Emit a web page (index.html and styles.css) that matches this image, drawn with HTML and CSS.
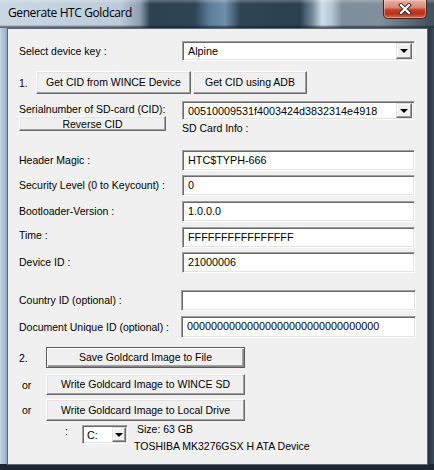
FILE: index.html
```html
<!DOCTYPE html>
<html>
<head>
<meta charset="utf-8">
<title>Generate HTC Goldcard</title>
<link rel="stylesheet" href="styles.css">
</head>
<body>
<div class="window">
  <div class="titlebar">
    <span class="title">Generate HTC Goldcard</span>
    <div class="close">
      <svg width="14" height="12" viewBox="0 0 14 12">
        <path d="M3 2 L11 10 M11 2 L3 10" stroke="#3a2a28" stroke-width="4" stroke-linecap="square" fill="none"/>
        <path d="M3 2 L11 10 M11 2 L3 10" stroke="#ffffff" stroke-width="2.2" stroke-linecap="square" fill="none"/>
      </svg>
    </div>
  </div>
  <div class="client">
    <div class="row r-key">
      <span class="lbl">Select device key :</span>
      <div class="combo field"><span class="ctext">Alpine</span><span class="arrow"></span></div>
    </div>

    <div class="row r-get">
      <span class="num">1.</span>
      <button class="btn b-wince">Get CID from WINCE Device</button>
      <button class="btn b-adb">Get CID using ADB</button>
    </div>

    <div class="serial">
      <div class="scol">
        <span class="slbl">Serialnumber of SD-card (CID):</span>
        <button class="btn b-rev">Reverse CID</button>
      </div>
      <div class="fcol">
        <div class="combo field c-cid"><span class="ctext">00510009531f4003424d3832314e4918</span><span class="arrow"></span></div>
        <span class="info">SD Card Info :</span>
      </div>
    </div>

    <div class="row tf r-magic">
      <span class="lbl">Header Magic :</span>
      <div class="box field">HTC$TYPH-666</div>
    </div>
    <div class="row tf r-sec">
      <span class="lbl">Security Level (0 to Keycount) :</span>
      <div class="box field">0</div>
    </div>
    <div class="row tf r-boot">
      <span class="lbl">Bootloader-Version :</span>
      <div class="box field">1.0.0.0</div>
    </div>
    <div class="row tf r-time">
      <span class="lbl up">Time :</span>
      <div class="box field">FFFFFFFFFFFFFFFF</div>
    </div>
    <div class="row tf r-dev">
      <span class="lbl">Device ID :</span>
      <div class="box field">21000006</div>
    </div>

    <div class="row tf r-country">
      <span class="lbl">Country ID (optional) :</span>
      <div class="box field2"></div>
    </div>
    <div class="row tf r-doc">
      <span class="lbl">Document Unique ID (optional) :</span>
      <div class="box field2">00000000000000000000000000000000</div>
    </div>

    <div class="row r-save">
      <span class="pre">2.</span>
      <button class="btn big default">Save Goldcard Image to File</button>
    </div>
    <div class="row r-wsd">
      <span class="pre or">or</span>
      <button class="btn big">Write Goldcard Image to WINCE SD</button>
    </div>
    <div class="row r-local">
      <span class="pre or">or</span>
      <button class="btn big">Write Goldcard Image to Local Drive</button>
    </div>

    <div class="row r-drive">
      <span class="colon">:</span>
      <div class="combo drive"><span class="ctext">C:</span><span class="arrow"></span></div>
      <div class="dinfo">
        <span class="size">Size: 63 GB</span>
        <span class="dev">TOSHIBA MK3276GSX H ATA Device</span>
      </div>
    </div>
  </div>
</div>
</body>
</html>
```

FILE: styles.css
```css
* { box-sizing: border-box; }
html, body { margin: 0; padding: 0; }
body {
  width: 434px;
  height: 470px;
  overflow: hidden;
  font-family: "Liberation Sans", Arial, sans-serif;
  font-size: 10.5px;
  color: #000;
  background: #1e2b37;
}

.window {
  width: 434px;
  height: 470px;
  display: flex;
  flex-direction: column;
  background:
    linear-gradient(to bottom, rgba(0,0,0,0) 0, rgba(0,0,0,0) 464px, #1c2733 464px),
    linear-gradient(to right, #c4d2df 0, #a9bfd4 4px, #8fa7bf 7px, #1e2b37 7px, #1e2b37 428px, #26333f 428px, #3c4b58 434px);
}

.titlebar {
  height: 28px;
  flex: none;
  display: flex;
  justify-content: space-between;
  align-items: flex-start;
  background:
    linear-gradient(to bottom, rgba(255,255,255,0.25) 0, rgba(255,255,255,0) 4px, rgba(0,0,0,0) 25px, rgba(20,30,40,0.6) 27px),
    linear-gradient(to right, #cad7e3 0, #bccbd9 120px, #8c9fb1 140px, #2c4152 150px, #2f4455 195px, #5d7e99 210px, #6f8fab 225px, #304657 240px, #2a3f50 300px, #6f8798 312px, #cfdde8 322px, #b4c4d0 332px, #7e8e9b 342px, #808f9b 380px, #44525e 430px);
}

.title {
  font-family: "Open Sans", "Noto Sans", sans-serif;
  font-size: 12px;
  line-height: 16px;
  margin: 5px 0 0 8px;
  color: #000;
  letter-spacing: -0.4px;
}

.close {
  width: 44px;
  height: 19px;
  margin-right: 7px;
  border: 1px solid #4a2119;
  border-top: none;
  border-radius: 0 0 5px 5px;
  background: linear-gradient(to bottom, #e9b0a3 0, #dc8a78 40%, #c2412a 55%, #b8311c 75%, #d56a52 100%);
  box-shadow: inset 0 0 0 1px rgba(255,220,210,0.45);
  display: flex;
  align-items: center;
  justify-content: center;
}

.client {
  flex: 1;
  margin: 0 6px 5px 7px;
  border: 1px solid #5b6874;
  background: #f0f0f0;
  padding: 12px 0 0 11px;
}

.row {
  display: flex;
  align-items: center;
}

.lbl {
  width: 163px;
  flex: none;
  line-height: 13px;
  white-space: nowrap;
}
.lbl.up { margin-top: -5px; }

/* inset field look */
.combo, .box {
  background: #fff;
  border: 1px solid;
  border-color: #a0a0a0 #ffffff #ffffff #a0a0a0;
  box-shadow: inset 1px 1px 0 #696969, inset -1px -1px 0 #e3e3e3;
  font-size: 10.8px;
}

.field { width: 233px; }
.field2 { width: 235px; margin-left: -1px; }

.combo {
  height: 20px;
  display: flex;
  align-items: center;
  justify-content: space-between;
  padding: 2px 2px 2px 5px;
}
.ctext { white-space: nowrap; }

.arrow {
  width: 16px;
  height: 16px;
  flex: none;
  background: #f0f0f0;
  border: 1px solid;
  border-color: #e3e3e3 #696969 #696969 #e3e3e3;
  box-shadow: inset -1px -1px 0 #a0a0a0, inset 1px 1px 0 #ffffff;
  position: relative;
}
.arrow::after {
  content: "";
  position: absolute;
  left: 3px;
  top: 5px;
  border-left: 4px solid transparent;
  border-right: 4px solid transparent;
  border-top: 4px solid #000;
}

.box {
  height: 21px;
  line-height: 17px;
  padding: 1px 0 0 5px;
  white-space: nowrap;
}

.btn {
  font-family: "Liberation Sans", Arial, sans-serif;
  font-size: 10.5px;
  color: #000;
  background: #f0f0f0;
  border: 1px solid;
  border-color: #ffffff #696969 #696969 #ffffff;
  box-shadow: inset -1px -1px 0 #a0a0a0, inset 1px 1px 0 #e3e3e3;
  padding: 0;
  margin: 0;
  line-height: 13px;
  white-space: nowrap;
}

.r-key { height: 20px; }

.r-get { height: 23px; margin-top: 10px; }
.num { width: 17px; flex: none; }
.b-wince { width: 155px; height: 23px; }
.b-adb { width: 114px; height: 23px; margin-left: 2px; }

.serial {
  display: flex;
  margin-top: 7px;
}
.scol {
  width: 163px;
  flex: none;
  display: flex;
  flex-direction: column;
  align-items: flex-start;
}
.slbl { line-height: 13px; margin-top: 2px; white-space: nowrap; }
.b-rev { width: 147px; height: 15px; line-height: 12px; }
.fcol { display: flex; flex-direction: column; }
.c-cid { height: 19px; padding-top: 1px; padding-bottom: 1px; }
.c-cid .arrow { height: 15px; }
.c-cid .arrow::after { top: 5px; }
.info { line-height: 13px; margin-top: 2px; }

.r-magic { margin-top: 15px; }
.r-sec { margin-top: 4px; }
.r-boot { margin-top: 5px; }
.r-time { margin-top: 5px; }
.r-dev { margin-top: 4px; }
.r-country { margin-top: 17px; }
.r-doc { margin-top: 5px; }
.r-doc .box { height: 22px; }

.pre { width: 27px; flex: none; }
.pre.or { padding-left: 3px; }
.big { width: 199px; height: 21px; }
.btn.default {
  border-color: #5a5a5a;
  box-shadow: inset 1px 1px 0 #ffffff, inset -1px -1px 0 #8a8a8a, inset -2px -2px 0 #a0a0a0;
}
.r-save { margin-top: 9px; }
.r-wsd { margin-top: 6px; }
.r-local { margin-top: 4px; }
.r-local .big { height: 22px; }

.r-drive {
  margin-top: 4px;
  align-items: flex-start;
}
.colon {
  width: 17px;
  padding-left: 46px;
  box-sizing: content-box;
  line-height: 13px;
  margin-top: 0;
}
.drive {
  width: 46px;
  height: 19px;
  padding: 1px 1px 1px 4px;
}
.drive .arrow { width: 14px; height: 15px; }
.drive .arrow::after { left: 2px; top: 5px; }
.dinfo {
  display: flex;
  flex-direction: column;
  margin-left: 6px;
  margin-top: -4px;
  line-height: 17px;
}
.size { padding-left: 3px; }
```
